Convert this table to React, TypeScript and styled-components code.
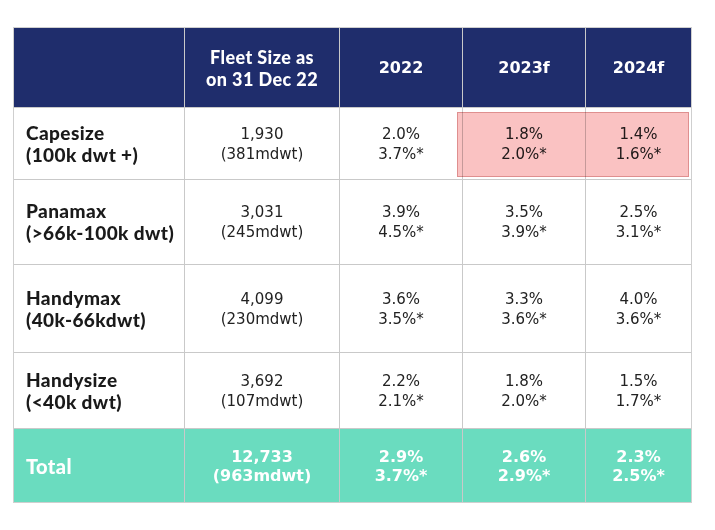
import React from "react";
import styled, { createGlobalStyle } from "styled-components";

const GlobalStyle = createGlobalStyle`
  html, body {
    margin: 0;
    padding: 0;
    background: #ffffff;
  }
`;

const Page = styled.div`
  width: 715px;
  height: 530px;
  padding: 27px 0 0 13px;
  box-sizing: border-box;
`;

const TableWrap = styled.div`
  position: relative;
  width: 679px;
`;

const Table = styled.div`
  display: grid;
  grid-template-columns: 170px 154px 122px 122px 105px;
  grid-template-rows: 79px 71px 84px 87px 75px 73px;
  gap: 1px;
  border: 1px solid #cfcfcf;
  background: #c9c9c9;
`;

const HeadCell = styled.div<{ $gothic?: boolean }>`
  background: #1f2d6c;
  color: #ffffff;
  display: flex;
  align-items: center;
  justify-content: center;
  text-align: center;
  font-family: ${(p) =>
    p.$gothic ? "Lato, 'DejaVu Sans', sans-serif" : "'DejaVu Sans', Verdana, sans-serif"};
  font-weight: ${(p) => (p.$gothic ? 900 : 700)};
  font-size: ${(p) => (p.$gothic ? "18px" : "16px")};
  letter-spacing: ${(p) => (p.$gothic ? "0.4px" : "0")};
  line-height: 22px;
`;

const LabelCell = styled.div<{ $total?: boolean }>`
  background: ${(p) => (p.$total ? "#6adcbf" : "#ffffff")};
  color: ${(p) => (p.$total ? "#ffffff" : "#1a1a1a")};
  display: flex;
  align-items: center;
  padding-left: 12px;
  font-family: Lato, "DejaVu Sans", sans-serif;
  font-weight: 900;
  font-size: ${(p) => (p.$total ? "20px" : "19px")};
  letter-spacing: 0.4px;
  line-height: 22px;
`;

const ValueCell = styled.div<{ $total?: boolean }>`
  background: ${(p) => (p.$total ? "#6adcbf" : "#ffffff")};
  color: ${(p) => (p.$total ? "#ffffff" : "#222222")};
  display: flex;
  flex-direction: column;
  align-items: center;
  justify-content: center;
  font-family: "DejaVu Sans", Verdana, sans-serif;
  font-weight: ${(p) => (p.$total ? 700 : 400)};
  font-size: ${(p) => (p.$total ? "16px" : "15px")};
  line-height: ${(p) => (p.$total ? "19px" : "20px")};
`;

const Highlight = styled.div`
  position: absolute;
  left: 444px;
  top: 85px;
  width: 232px;
  height: 65px;
  background: #fac2c2;
  border: 1px solid #df8f8f;
  box-sizing: border-box;
  mix-blend-mode: multiply;
  pointer-events: none;
`;

type Row = {
  name: string;
  sub: string;
  fleet: [string, string];
  values: [string, string][];
  total?: boolean;
};

const rows: Row[] = [
  {
    name: "Capesize",
    sub: "(100k dwt +)",
    fleet: ["1,930", "(381mdwt)"],
    values: [
      ["2.0%", "3.7%*"],
      ["1.8%", "2.0%*"],
      ["1.4%", "1.6%*"],
    ],
  },
  {
    name: "Panamax",
    sub: "(>66k-100k dwt)",
    fleet: ["3,031", "(245mdwt)"],
    values: [
      ["3.9%", "4.5%*"],
      ["3.5%", "3.9%*"],
      ["2.5%", "3.1%*"],
    ],
  },
  {
    name: "Handymax",
    sub: "(40k-66kdwt)",
    fleet: ["4,099", "(230mdwt)"],
    values: [
      ["3.6%", "3.5%*"],
      ["3.3%", "3.6%*"],
      ["4.0%", "3.6%*"],
    ],
  },
  {
    name: "Handysize",
    sub: "(<40k dwt)",
    fleet: ["3,692", "(107mdwt)"],
    values: [
      ["2.2%", "2.1%*"],
      ["1.8%", "2.0%*"],
      ["1.5%", "1.7%*"],
    ],
  },
  {
    name: "Total",
    sub: "",
    fleet: ["12,733", "(963mdwt)"],
    values: [
      ["2.9%", "3.7%*"],
      ["2.6%", "2.9%*"],
      ["2.3%", "2.5%*"],
    ],
    total: true,
  },
];

export default function App() {
  return (
    <Page>
      <GlobalStyle />
      <TableWrap>
        <Table>
          <HeadCell />
          <HeadCell $gothic>
            Fleet Size as
            <br />
            on 31 Dec 22
          </HeadCell>
          <HeadCell>2022</HeadCell>
          <HeadCell>2023f</HeadCell>
          <HeadCell>2024f</HeadCell>
          {rows.map((r) => (
            <React.Fragment key={r.name}>
              <LabelCell $total={r.total}>
                <div>
                  {r.name}
                  {r.sub && (
                    <>
                      <br />
                      {r.sub}
                    </>
                  )}
                </div>
              </LabelCell>
              <ValueCell $total={r.total}>
                <span>{r.fleet[0]}</span>
                <span>{r.fleet[1]}</span>
              </ValueCell>
              {r.values.map((v, i) => (
                <ValueCell key={i} $total={r.total}>
                  <span>{v[0]}</span>
                  <span>{v[1]}</span>
                </ValueCell>
              ))}
            </React.Fragment>
          ))}
        </Table>
        <Highlight />
      </TableWrap>
    </Page>
  );
}
